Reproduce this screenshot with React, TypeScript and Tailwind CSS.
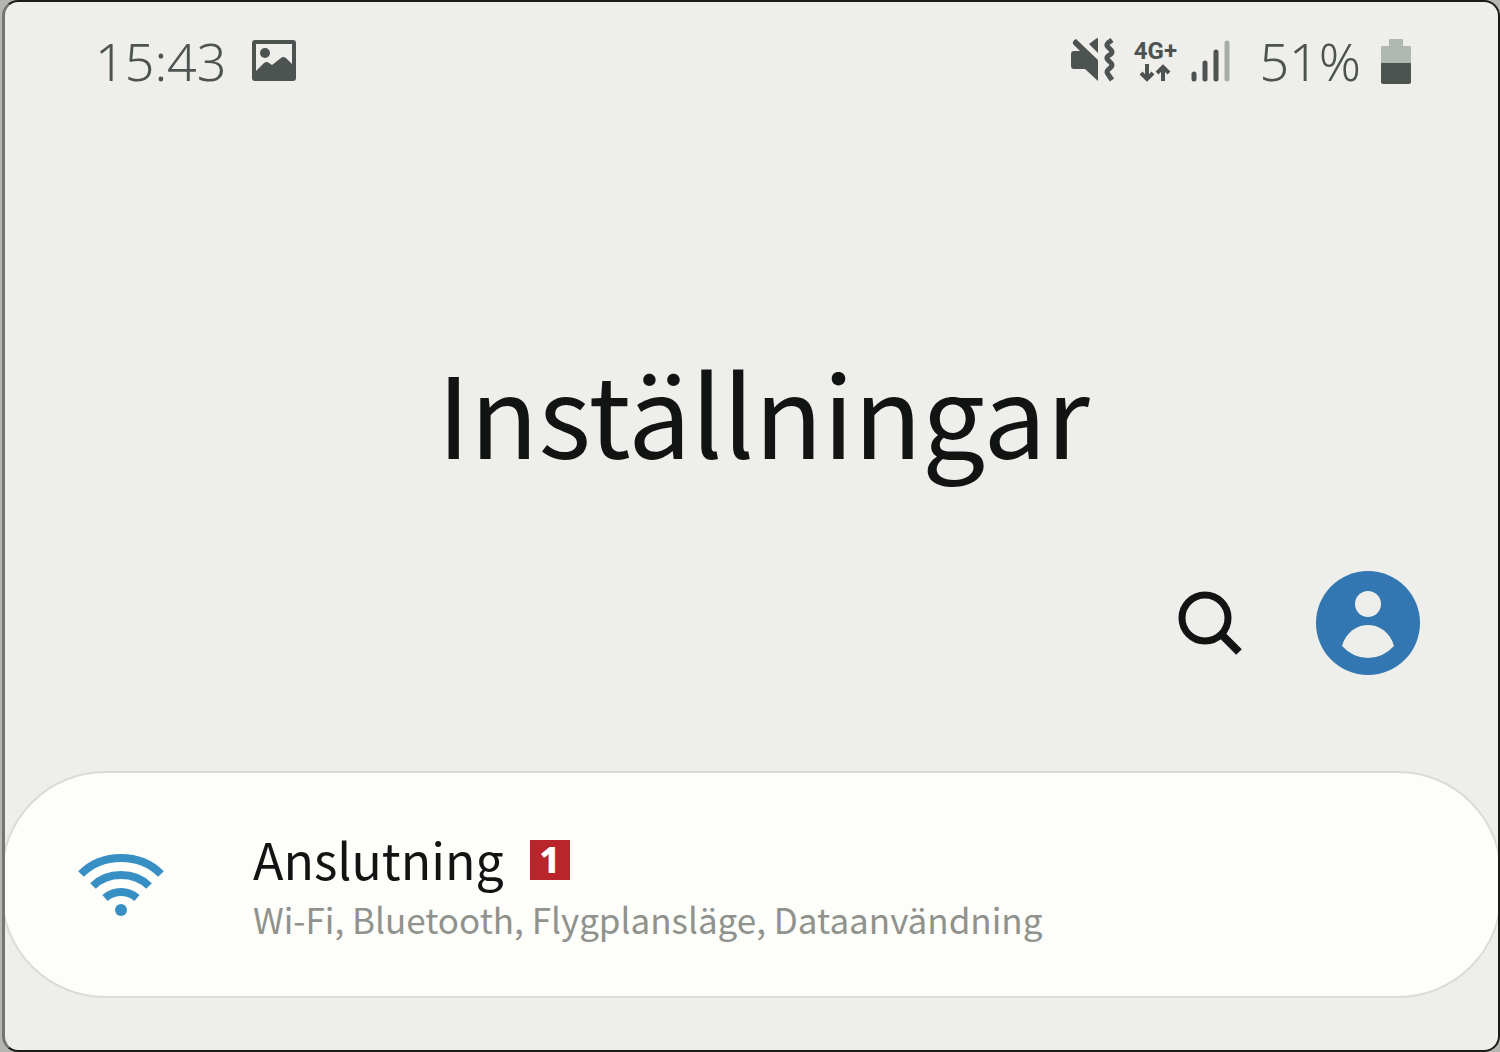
import type { ReactNode } from 'react';

interface SettingsRowProps {
  icon: ReactNode;
  title: string;
  badge: number;
  description: string;
}

function PictureIcon() {
  return (
    <svg viewBox="0 0 44 42" className="w-11" fill="#4d5351" aria-hidden="true">
      <path
        fillRule="evenodd"
        d="M3 0h38a3 3 0 0 1 3 3v35a3 3 0 0 1-3 3H3a3 3 0 0 1-3-3V3a3 3 0 0 1 3-3ZM4 4v27l8-8q3-2 5 0l3 2 9-7q2-2 5 0l6 6V4Z"
      />
      <circle cx="13" cy="13" r="5" />
    </svg>
  );
}

function MuteVibrateIcon() {
  return (
    <svg viewBox="0 0 44 46" className="w-11" fill="#4d5351" aria-hidden="true">
      <path d="M0 16q0-3 3-3h6L2 6q-1-3 3-5l22 21v21L14 31H3q-3 0-3-3Z" />
      <path d="M18 6l8-6q1 0 1 1v14Z" />
      <path
        d="M41 2l-4 3q-2 2 0 4l3 3q2 2 0 4l-3 2q-2 2 0 4l3 3q2 2 0 4l-3 3q-2 2 0 4l4 6"
        fill="none"
        stroke="#4d5351"
        strokeWidth="5"
      />
    </svg>
  );
}

function DataArrowsIcon() {
  return (
    <svg viewBox="0 0 32 20" className="w-8" fill="none" stroke="#4d5351" strokeWidth="4" aria-hidden="true">
      <path d="M8 1v15M2 10l6 6 6-6M24 18V4M18 10l6-6 6 6" />
    </svg>
  );
}

function SignalIcon() {
  return (
    <svg viewBox="0 0 40 44" className="w-10" fill="none" stroke="#4d5351" strokeWidth="5" strokeLinecap="round" aria-hidden="true">
      <path d="M3 35v5M14 24v16M25 13v27" />
      <path d="M36 4v36" stroke="#a9adaa" />
    </svg>
  );
}

function BatteryIcon() {
  return (
    <svg viewBox="0 0 30 45" className="w-[30px]" aria-hidden="true">
      <path d="M8 1q0-1 1-1h12q1 0 1 1v6h7q1 0 1 1v17H0V8q0-1 1-1h7Z" fill="#b0b6b0" />
      <path d="M0 24h30v19q0 2-2 2H2q-2 0-2-2Z" fill="#4d5351" />
    </svg>
  );
}

function SearchIcon() {
  return (
    <svg viewBox="0 0 64 64" className="w-16" fill="none" stroke="#111412" aria-hidden="true">
      <circle cx="27" cy="27" r="23" strokeWidth="7" />
      <path d="M43 43l18 18" strokeWidth="8" />
    </svg>
  );
}

function AccountIcon() {
  return (
    <svg viewBox="0 0 104 104" className="w-[104px]" aria-hidden="true">
      <circle cx="52" cy="52" r="52" fill="#3277b1" />
      <circle cx="52" cy="33" r="13" fill="#eeeeea" />
      <path d="M26 75C34 47 70 47 78 75Q67 87 52 87T26 75Z" fill="#eeeeea" />
    </svg>
  );
}

function WifiIcon() {
  return (
    <svg viewBox="0 0 86 64" className="w-[86px]" fill="none" stroke="#388fc4" strokeWidth="8" aria-hidden="true">
      <path d="M3 20Q19 4 43 4T83 20M15 32Q26 21 43 21T71 32M27 44Q34 38 43 38T59 44" />
      <circle cx="43" cy="56" r="6" fill="#388fc4" stroke="none" />
    </svg>
  );
}

function StatusBar() {
  return (
    <div className="flex h-12 items-center justify-between pl-[90px] pr-[87px] font-['Noto_Sans',sans-serif] text-[#4d5351]">
      <div className="flex items-center gap-[26px]">
        <span className="text-[52px] leading-12 font-light">15:43</span>
        <PictureIcon />
      </div>
      <div className="flex items-center">
        <MuteVibrateIcon />
        <div className="ml-4 flex w-12 flex-col items-center">
          <span className="font-['Roboto',sans-serif] text-2xl leading-6 font-bold">4G+</span>
          <DataArrowsIcon />
        </div>
        <div className="ml-3">
          <SignalIcon />
        </div>
        <span className="ml-7 text-[52px] leading-12 font-light">51%</span>
        <div className="ml-5">
          <BatteryIcon />
        </div>
      </div>
    </div>
  );
}

function SettingsRow({ icon, title, badge, description }: SettingsRowProps) {
  return (
    <a
      href="#anslutning"
      className="-mx-1 flex items-center rounded-[104px] border-2 border-[#dcdcd7] bg-[#fdfdf9] px-[75px] pt-14 pb-[53px]"
    >
      {icon}
      <div className="ml-[89px]">
        <div className="mb-2 flex items-center gap-[26px]">
          <h2 className="text-[50px] leading-[58px] text-[#111412]">{title}</h2>
          <span className="mt-1 flex size-10 items-center justify-center bg-[#b9252b] font-['Noto_Sans',sans-serif] text-4xl leading-10 font-extrabold text-white">
            {badge}
          </span>
        </div>
        <p className="text-[35px] leading-12 text-[#90928d]">{description}</p>
      </div>
    </a>
  );
}

export default function App() {
  return (
    <div className="flex min-h-screen flex-col bg-[#b5b5b2] pl-[2px] font-['Noto_Sans_CJK_JP',sans-serif]">
      <main className="flex-1 overflow-hidden rounded-2xl border-2 border-l-[3px] border-[#1b1b1a] border-l-[#747472] bg-[#eeeeea] pt-[35px]">
        <StatusBar />
        <h1 className="mt-[253px] pl-6 text-center text-[112px] leading-[144px] text-[#111412]">Inställningar</h1>
        <div className="mt-[89px] flex items-center justify-end gap-[74px] pr-[78px]">
          <button type="button" aria-label="Sök">
            <SearchIcon />
          </button>
          <button type="button" aria-label="Konto">
            <AccountIcon />
          </button>
        </div>
        <div className="mt-24">
          <SettingsRow
            icon={<WifiIcon />}
            title="Anslutning"
            badge={1}
            description="Wi-Fi, Bluetooth, Flygplansläge, Dataanvändning"
          />
        </div>
      </main>
    </div>
  );
}
